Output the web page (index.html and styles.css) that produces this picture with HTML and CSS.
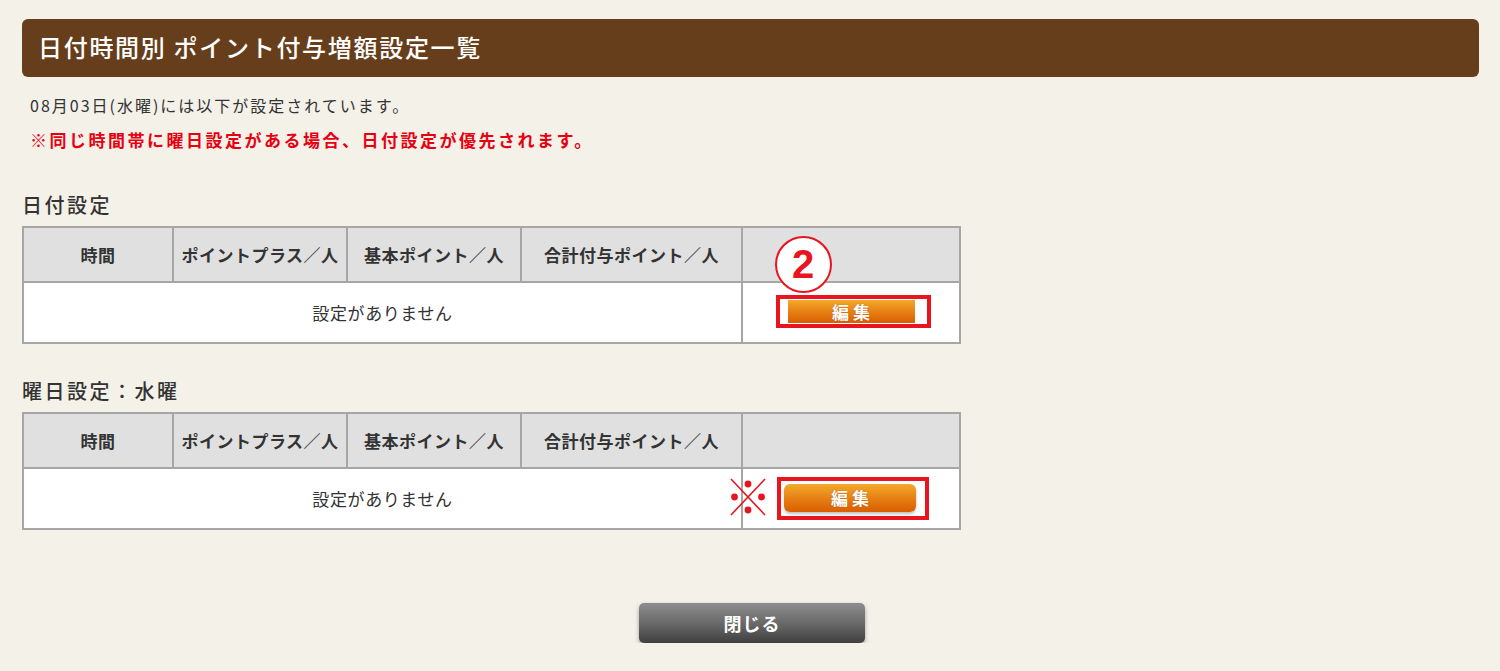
FILE: index.html
```html
<!DOCTYPE html>
<html lang="ja">
<head>
<meta charset="utf-8">
<title>日付時間別 ポイント付与増額設定一覧</title>
<link rel="stylesheet" href="styles.css">
</head>
<body>
<div class="page">
  <h1 class="title-bar">日付時間別 ポイント付与増額設定一覧</h1>
  <p class="info">08月03日(水曜)には以下が設定されています。</p>
  <p class="warn">※同じ時間帯に曜日設定がある場合、日付設定が優先されます。</p>

  <h2 class="section-title first">日付設定</h2>
  <table class="setting-table">
    <colgroup>
      <col class="c1"><col class="c2"><col class="c3"><col class="c4"><col class="c5">
    </colgroup>
    <thead>
      <tr>
        <th>時間</th>
        <th>ポイントプラス／人</th>
        <th>基本ポイント／人</th>
        <th>合計付与ポイント／人</th>
        <th></th>
      </tr>
    </thead>
    <tbody>
      <tr>
        <td colspan="4" class="empty">設定がありません</td>
        <td class="action">
          <span class="hl-box box1">
            <span class="circle-num">2</span>
            <button class="btn-edit">編集</button>
          </span>
        </td>
      </tr>
    </tbody>
  </table>

  <h2 class="section-title second">曜日設定：水曜</h2>
  <table class="setting-table">
    <colgroup>
      <col class="c1"><col class="c2"><col class="c3"><col class="c4"><col class="c5">
    </colgroup>
    <thead>
      <tr>
        <th>時間</th>
        <th>ポイントプラス／人</th>
        <th>基本ポイント／人</th>
        <th>合計付与ポイント／人</th>
        <th></th>
      </tr>
    </thead>
    <tbody>
      <tr>
        <td colspan="4" class="empty">設定がありません</td>
        <td class="action">
          <span class="hl-box box2">
            <svg class="kome" viewBox="0 0 38 40" width="38" height="40" aria-hidden="true">
              <line x1="2" y1="2" x2="36" y2="38" stroke="#e8141e" stroke-width="1.6"/>
              <line x1="36" y1="2" x2="2" y2="38" stroke="#e8141e" stroke-width="1.6"/>
              <circle cx="19" cy="7" r="3.4" fill="#e8141e"/>
              <circle cx="19" cy="33" r="3.4" fill="#e8141e"/>
              <circle cx="5.5" cy="20" r="3.4" fill="#e8141e"/>
              <circle cx="32.5" cy="20" r="3.4" fill="#e8141e"/>
            </svg>
            <button class="btn-edit">編集</button>
          </span>
        </td>
      </tr>
    </tbody>
  </table>

  <div class="footer">
    <button class="btn-close">閉じる</button>
  </div>
</div>
</body>
</html>
```

FILE: styles.css
```css
html, body {
  margin: 0;
  padding: 0;
  background: #f4f1e9;
}

body {
  font-family: "Noto Sans CJK JP", "Noto Sans", sans-serif;
  color: #333;
}

.page {
  padding: 19px 21px 0 22px;
}

.title-bar {
  margin: 0;
  height: 58px;
  line-height: 56px;
  padding-left: 16px;
  background: #673e1b;
  border-radius: 6px;
  color: #fff;
  font-size: 24px;
  font-weight: 500;
  letter-spacing: 1.7px;
}

.info {
  margin: 18px 0 0 8px;
  font-size: 16px;
  line-height: 20px;
  letter-spacing: 2px;
  color: #333;
}

.warn {
  margin: 15px 0 0 8px;
  font-size: 17px;
  line-height: 20px;
  letter-spacing: 2.5px;
  color: #e60012;
  font-weight: 700;
}

.section-title {
  margin: 0 0 9px 0;
  font-size: 20px;
  line-height: 24px;
  letter-spacing: 2.5px;
  font-weight: 500;
  color: #333;
}

.section-title.first {
  margin-top: 43px;
}

.section-title.second {
  margin-top: 35px;
}

.setting-table {
  width: 937px;
  border-collapse: collapse;
  table-layout: fixed;
  background: #fff;
  border: 2px solid #a6a6a6;
}

.c1 { width: 150px; }
.c2 { width: 174px; }
.c3 { width: 174px; }
.c4 { width: 221px; }
.c5 { width: 218px; }

.setting-table th {
  height: 53px;
  padding: 0;
  background: #e0e0e0;
  border: 2px solid #a6a6a6;
  font-size: 17px;
  font-weight: 700;
  letter-spacing: 0.5px;
  color: #333;
  text-align: center;
  white-space: nowrap;
}

.setting-table td {
  height: 59px;
  padding: 0;
  border: 2px solid #a6a6a6;
  font-size: 17px;
  letter-spacing: 0.6px;
  color: #333;
  text-align: center;
  vertical-align: middle;
}

.empty {
  padding-left: 2px;
}

.action {
  padding: 0 0 0 4px !important;
}

.hl-box {
  position: relative;
  display: inline-flex;
  align-items: center;
  border: 4px solid #e8141e;
  vertical-align: middle;
}

.box1 {
  padding: 1px 9px 1px 5px;
  margin-top: -3px;
}

.box2 {
  padding: 3px 9px 4px 3px;
}

.btn-edit {
  display: block;
  width: 133px;
  height: 23px;
  padding: 0;
  border: none;
  border-radius: 4px;
  background: linear-gradient(#f3aa2c, #e57d12 55%, #d95e00);
  box-shadow: 0 2px 3px rgba(0, 0, 0, 0.25);
  color: #fff;
  font-family: "Noto Sans CJK JP", sans-serif;
  font-size: 17px;
  font-weight: 700;
  line-height: 23px;
  letter-spacing: 4px;
  text-indent: 4px;
  text-shadow: 0 0 1px rgba(120, 40, 0, 0.6);
}

.box1 .btn-edit {
  border-left: 3px solid #fff;
  border-right: 3px solid #fff;
  border-radius: 0;
  box-shadow: none;
}

.box2 .btn-edit {
  width: 132px;
  height: 28px;
  line-height: 28px;
  border-radius: 6px;
}

.circle-num {
  position: absolute;
  left: -5px;
  top: -63px;
  width: 53px;
  height: 53px;
  border: 2px solid #e8141e;
  border-radius: 50%;
  background: #fff;
  color: #e8141e;
  font-family: "Liberation Sans", Arial, sans-serif;
  font-size: 40px;
  font-weight: 700;
  line-height: 53px;
  letter-spacing: 0;
  text-indent: 0;
  text-align: center;
}

.kome {
  position: absolute;
  left: -52px;
  top: -4px;
}

.footer {
  display: flex;
  justify-content: center;
  margin-top: 73px;
}

.btn-close {
  width: 226px;
  height: 40px;
  margin-left: 3px;
  border: none;
  border-radius: 5px;
  background: linear-gradient(#8e8e8e, #6a6a6a 50%, #3f3f3f);
  box-shadow: 0 2px 4px rgba(0, 0, 0, 0.35);
  color: #fff;
  font-family: "Noto Sans CJK JP", sans-serif;
  font-size: 18px;
  font-weight: 700;
  letter-spacing: 1px;
}
```
